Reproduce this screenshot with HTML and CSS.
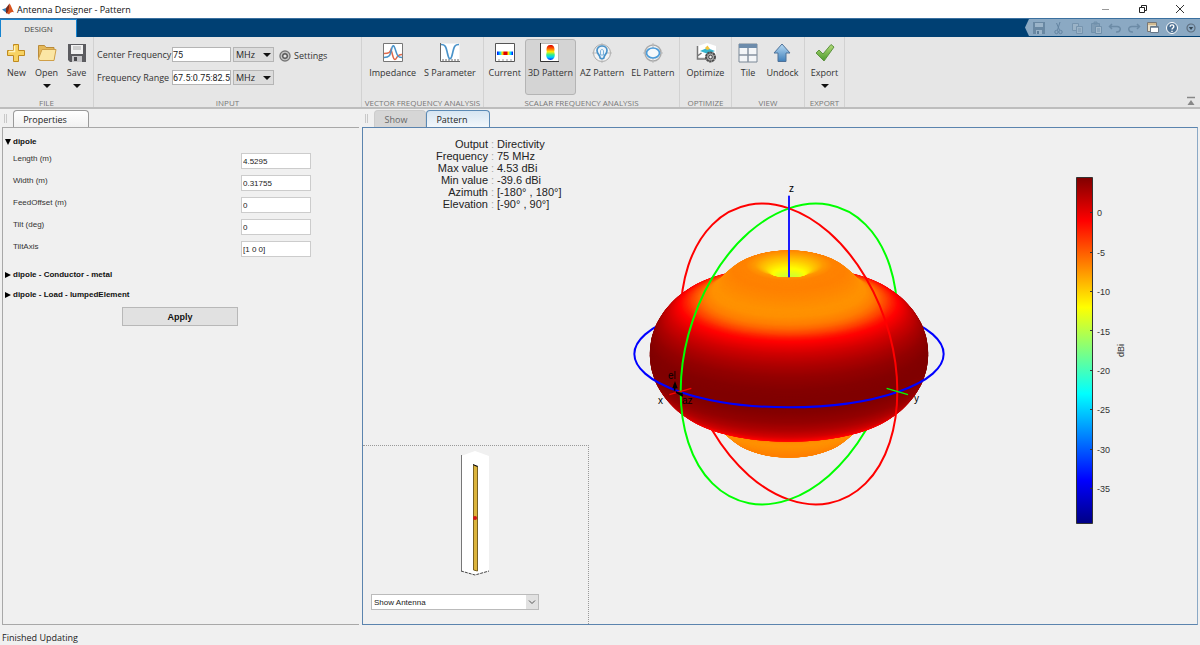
FILE: index.html
```html
<!DOCTYPE html>
<html lang="en">
<head>
<meta charset="utf-8">
<title>Antenna Designer - Pattern</title>
<link rel="stylesheet" href="styles.css">
</head>
<body>
<div class="app">
  <header class="titlebar">
    <svg class="logo" viewBox="0 0 12 12"><path d="M0 6.500 4 5l2 2-2 2.500z" fill="#3b7fb5"/><path d="M4 5 7.500.5 8 7l-3 4-1-1.500z" fill="#7a2a1c"/><path d="M7.500.5C9 2 10 6 12 9.500 10 8.500 9 9 7 11.500L5 10c2-2 2-6 2.500-9.500z" fill="#d9541e"/></svg>
    <h1 class="title">Antenna Designer - Pattern</h1>
    <div class="window-buttons">
      <button aria-label="Minimize"><svg viewBox="0 0 10 10"><path d="M1 5.500h7" stroke="#999" fill="none"/></svg></button>
      <button aria-label="Restore"><svg viewBox="0 0 10 10"><path d="M1.500 3.500h5v5h-5zM3.500 3V1.500h5v5H7" stroke="#222" fill="none"/></svg></button>
      <button aria-label="Close"><svg viewBox="0 0 10 10"><path d="m1 1 8 8M9 1 1 9" stroke="#333" fill="none"/></svg></button>
    </div>
  </header>

  <nav class="ribbon">
    <button class="ribbon-tab">DESIGN</button>
    <div class="quick">
      <button aria-label="Save"><svg viewBox="0 0 14 14"><path d="M1 1h12v12H1z" fill="#6988a3"/><path d="M3 2h8v4H3zM4 9h6v4H4z" fill="#9bb4c9"/><path d="M5 10h2v3H5z" fill="#5c7c98"/></svg></button>
      <button aria-label="Cut"><svg viewBox="0 0 14 14" fill="none" stroke="#6484a1"><path d="M9 1 6.500 9M5.500 2l3 7"/><circle cx="5.500" cy="11" r="1.700"/><circle cx="9.500" cy="11" r="1.700"/></svg></button>
      <button aria-label="Copy"><svg viewBox="0 0 14 14" fill="#9bb3c7" stroke="#7694ae"><path d="M2.500 2.500h6v7h-6z"/><path d="M6.500 5.500h6v7h-6zM8 8h3M8 10h3"/></svg></button>
      <button aria-label="Paste"><svg viewBox="0 0 14 14" fill="#7f9cb5" stroke="#7090ab"><path d="M2.500 2.500h8v9h-8zM5 1h3v2H5z"/><path d="M6.500 5.500h6v7h-6zM8 8h3M8 10h3" fill="#a3b9cb"/></svg></button>
      <button aria-label="Undo"><svg viewBox="0 0 14 14" fill="none" stroke="#6c8ba6" stroke-width="1.500"><path d="M4 3 1.500 5.500 4 8M2 5.500h7c5 0 4 6-1 5.500"/></svg></button>
      <button aria-label="Redo"><svg viewBox="0 0 14 14" fill="none" stroke="#6c8ba6" stroke-width="1.500"><path d="m10 3 2.500 2.500L10 8M12 5.500H5c-5 0-4 6 1 5.500"/></svg></button>
      <button aria-label="Switch windows"><svg viewBox="0 0 14 14"><path d="M1.500 1.500h9v9h-9z" fill="#e8dfc8" stroke="#777"/><path d="M2 3h8" stroke="#b9955a"/><path d="M4.500 5.500h8v6h-8z" fill="#fff" stroke="#678"/><path d="M5 6.500h7" stroke="#89a"/></svg></button>
      <button aria-label="Help"><svg viewBox="0 0 14 14"><circle cx="7" cy="7" r="5.500" fill="#4d7194" stroke="#fff"/><path d="M5.200 5.700c0-2.600 3.800-2.300 3.600 0C8.700 7 7 7 7 8.500M7 9.700v1.400" fill="none" stroke="#fff" stroke-width="1.400"/></svg></button>
      <button aria-label="More"><svg viewBox="0 0 14 14"><circle cx="7" cy="7" r="4" fill="none" stroke="#5d6d7d" stroke-width="1.200"/><path d="M4.800 6h4.400L7 9z" fill="#344554"/></svg></button>
    </div>
  </nav>

  <div class="toolstrip">
    <section class="group g-file">
      <div class="tools">
        <button class="tool"><svg viewBox="0 0 20 20"><path d="M7.500 1.500h5v6h6v5h-6v6h-5v-6h-6v-5h6z" fill="#f7d262" stroke="#c08a1e"/><path d="M8.500 3v5.500H3" stroke="#fff3bd" fill="none" stroke-width="1.500"/></svg><span>New</span></button>
        <button class="tool"><svg viewBox="0 0 20 20"><path d="M1.500 16V2.500h6l1.500 2h8V16z" fill="#e5b95a" stroke="#b98b3a"/><path d="m2.500 17.500-1-2 3.500-9h14l-2 11z" fill="#fbe6a4" stroke="#cf9f48"/></svg><span>Open</span><i class="caret"></i></button>
        <button class="tool"><svg viewBox="0 0 20 20"><path d="M1 1h18v18H3l-2-2z" fill="#5c5c60"/><path d="M4 2h12v9H4z" fill="#f2f2f2"/><path d="M6 4h8M6 6h8" stroke="#aaa"/><path d="M5 13h10v6H5z" fill="#c5c5c8"/><path d="M7 14h3v4H7z" fill="#4a4a4e"/></svg><span>Save</span><i class="caret"></i></button>
      </div>
      <h2>FILE</h2>
    </section>

    <section class="group g-input">
      <div class="tools input-tools">
        <form class="freq">
          <label for="cf">Center Frequency</label>
          <input id="cf" value="75">
          <span class="unit"><select aria-label="Center frequency unit"><option>MHz</option></select></span>
          <label for="fr">Frequency Range</label>
          <input id="fr" value="67.5:0.75:82.5">
          <span class="unit"><select aria-label="Frequency range unit"><option>MHz</option></select></span>
        </form>
        <button class="settings"><svg viewBox="0 0 12 12" fill="none"><circle cx="6" cy="6" r="5" stroke="#777" stroke-width="1.400"/><circle cx="6" cy="6" r="3.600" stroke="#bbb"/><circle cx="6" cy="6" r="2.300" stroke="#555" stroke-width="1.400"/></svg>Settings</button>
      </div>
      <h2>INPUT</h2>
    </section>

    <section class="group g-vector">
      <div class="tools">
        <button class="tool"><svg viewBox="0 0 20 20"><path d="M.5.500h19v18H.5z" fill="#fff" stroke="#777"/><path d="M1 10.500c5 0 6-1 7-4 2 6 2 10 4 10 2 0 1-5 7-5" fill="none" stroke="#e0694a" stroke-width="1.500"/><path d="M1 14.500c6 0 6-2 8-10 1-3 2-2 3 1 2 6 2 9 7 9" fill="none" stroke="#4a93c9" stroke-width="1.500"/></svg><span>Impedance</span></button>
        <button class="tool"><svg viewBox="0 0 20 20"><path d="M.5.500h19v18H.5z" fill="#fff"/><path d="M.5 0v18.500H20M3 18v-2m3 2v-2m3 2v-2m3 2v-2m3 2v-2m3 2v-2" fill="none" stroke="#666"/><path d="M1 1.500c5 0 5 3 6.500 9 1.500 7 3.500 7 5 0 1.500-6 1.500-9 6.500-9" fill="none" stroke="#4a93c9" stroke-width="1.700"/></svg><span>S Parameter</span></button>
      </div>
      <h2>VECTOR FREQUENCY ANALYSIS</h2>
    </section>

    <section class="group g-scalar">
      <div class="tools">
        <button class="tool"><svg viewBox="0 0 20 20"><defs><linearGradient id="cur"><stop offset="0" stop-color="#00f"/><stop offset=".2" stop-color="#0df"/><stop offset=".33" stop-color="#fe0"/><stop offset=".45" stop-color="#d00"/><stop offset=".6" stop-color="#d00"/><stop offset=".72" stop-color="#fe0"/><stop offset=".85" stop-color="#0df"/><stop offset="1" stop-color="#00f"/></linearGradient></defs><path d="M.5.500h19v18H.5z" fill="#fff" stroke="#555"/><path d="M2 8.500h16v3.500H2z" fill="url(#cur)"/><path d="M4 18v-2m4 2v-2m4 2v-2m4 2v-2" stroke="#999"/></svg><span>Current</span></button>
        <button class="tool active" aria-pressed="true"><svg viewBox="0 0 20 20"><defs><linearGradient id="pat" x2="0" y2="1"><stop offset="0" stop-color="#d00"/><stop offset=".25" stop-color="#f60"/><stop offset=".45" stop-color="#fe0"/><stop offset=".65" stop-color="#3e8"/><stop offset=".82" stop-color="#0cf"/><stop offset="1" stop-color="#02f"/></linearGradient></defs><path d="M.5.500h18v18H.5z" fill="#fff" stroke="#bbb"/><path d="M.5 0v18.500H19" fill="none" stroke="#333"/><path d="M10.500 2c3 0 4 2 4 4.500 0 1.500-.5 2 0 3.500 1 4-1 7-4 7s-5-3-4-7c.5-1.500 0-2 0-3.500 0-2.500 1-4.500 4-4.500z" fill="url(#pat)"/></svg><span>3D Pattern</span></button>
        <button class="tool"><svg viewBox="0 0 20 20" fill="none"><circle cx="10" cy="10" r="8.500" fill="#f4f4f4" stroke="#aaa"/><path d="M10 0v20M0 10h20" stroke="#bbb"/><path d="M8 14.500c0-2.500-3-3.500-3-7 0-6 10-6 10 0 0 3.500-3 4.500-3 7 0 1.500-4 1.500-4 0z" fill="#eef5fb" stroke="#4a93c9" stroke-width="1.700"/><path d="M8.500 8c0-2 3-2 3 0v4h-3z" stroke="#7ab2dc"/></svg><span>AZ Pattern</span></button>
        <button class="tool"><svg viewBox="0 0 20 20" fill="none"><circle cx="10" cy="10" r="8" fill="#f4f4f4" stroke="#aaa" stroke-width="1.500"/><path d="M10 0v20M0 10h20" stroke="#bbb"/><ellipse cx="10" cy="10" rx="6.500" ry="5" fill="#f4f8fb" stroke="#4a9bd9" stroke-width="1.700"/></svg><span>EL Pattern</span></button>
      </div>
      <h2>SCALAR FREQUENCY ANALYSIS</h2>
    </section>

    <section class="group g-optimize">
      <div class="tools">
        <button class="tool"><svg viewBox="0 0 20 20"><path d="m2 3 9-3 9 3v11H2z" fill="#fff"/><path d="M1.500 3v13h9M1.500 13l4-3" fill="none" stroke="#777" stroke-width="1.500"/><path d="m4 8 7-3 8 3-7 3z" fill="#35b5cf"/><path d="m9 5 2.500-2.500L14 6l-3 1z" fill="#f2c33a"/><circle cx="14.500" cy="14" r="4.500" fill="#aaa" stroke="#4d4d4d" stroke-width="2" stroke-dasharray="2.400 .5"/><circle cx="14.500" cy="14" r="1.800" fill="#eee" stroke="#444"/></svg><span>Optimize</span></button>
      </div>
      <h2>OPTIMIZE</h2>
    </section>

    <section class="group g-view">
      <div class="tools">
        <button class="tool"><svg viewBox="0 0 20 20"><path d="M1 1h18v18H1z" fill="#f4f6f8" stroke="#7b8896"/><path d="M1 1h18v4H1z" fill="#6d8cab"/><path d="M10 5v14M1 12h18" stroke="#8793a0" stroke-width="1.500"/></svg><span>Tile</span></button>
        <button class="tool"><svg viewBox="0 0 20 20"><defs><linearGradient id="up" x2="0" y2="1"><stop offset="0" stop-color="#b9dcf5"/><stop offset="1" stop-color="#3f7fba"/></linearGradient></defs><path d="m10 1 8 9h-4v8.500H6V10H2z" fill="url(#up)" stroke="#4f7299"/></svg><span>Undock</span></button>
      </div>
      <h2>VIEW</h2>
    </section>

    <section class="group g-export">
      <div class="tools">
        <button class="tool"><svg viewBox="0 0 20 20"><defs><linearGradient id="ok" x2="0" y2="1"><stop offset="0" stop-color="#b4dc7a"/><stop offset="1" stop-color="#4b9a2c"/></linearGradient></defs><path d="m1 10 3-3 4 4 8-9.500L19 4 9 18z" fill="url(#ok)" stroke="#5d9340"/></svg><span>Export</span><i class="caret"></i></button>
      </div>
      <h2>EXPORT</h2>
    </section>
    <button class="collapse" aria-label="Collapse toolstrip"><svg viewBox="0 0 10 10"><path d="M1 1.500h8" stroke="#888" stroke-width="1.500"/><path d="M5 4 8.500 9h-7z" fill="#888"/></svg></button>
  </div>

  <main class="workspace">
    <section class="pane props">
      <div class="tabs"><i class="grip"></i><button class="tab current">Properties</button></div>
      <form class="pane-body props-body">
        <h3><svg viewBox="0 0 6 6"><path d="M0 0h6L3 6z"/></svg>dipole</h3>
        <div class="fields">
          <label for="len">Length (m)</label><input id="len" value="4.5295">
          <label for="wid">Width (m)</label><input id="wid" value="0.31755">
          <label for="off">FeedOffset (m)</label><input id="off" value="0">
          <label for="tilt">Tilt (deg)</label><input id="tilt" value="0">
          <label for="axis">TiltAxis</label><input id="axis" value="[1 0 0]">
        </div>
        <h3 class="closed"><svg viewBox="0 0 6 6"><path d="M0 0v6l6-3z"/></svg>dipole - Conductor - metal</h3>
        <h3 class="closed"><svg viewBox="0 0 6 6"><path d="M0 0v6l6-3z"/></svg>dipole - Load - lumpedElement</h3>
        <button class="apply" type="button">Apply</button>
      </form>
    </section>

    <section class="pane figure">
      <div class="tabs"><i class="grip"></i><button class="tab idle">Show</button><button class="tab current">Pattern</button></div>
      <div class="pane-body figure-body">
        <div class="side">
          <dl class="info">
            <dt>Output</dt><dd>Directivity</dd>
            <dt>Frequency</dt><dd>75 MHz</dd>
            <dt>Max value</dt><dd>4.53 dBi</dd>
            <dt>Min value</dt><dd>-39.6 dBi</dd>
            <dt>Azimuth</dt><dd>[-180° , 180°]</dd>
            <dt>Elevation</dt><dd>[-90° , 90°]</dd>
          </dl>
          <div class="antenna">
            <svg class="antenna-view" viewBox="0 0 30 126" width="30" height="126">
              <path d="M1 6 15 1l14 5v115l-14 4-14-4z" fill="#fff"/>
              <path d="M1.500 5v116" stroke="#777" fill="none"/>
              <path d="m1 121 14 4 14-4" stroke="#444" fill="none" stroke-dasharray="3 1"/>
              <path d="m13.500 15 4 2v104l-4-1z" fill="#dcb43c" stroke="#7a6120"/>
              <path d="m13 14.500 5 2" stroke="#111"/>
              <circle cx="15" cy="68" r="2" fill="#d01515"/>
            </svg>
            <span class="show"><select aria-label="Show"><option>Show Antenna</option></select><svg viewBox="0 0 12 14"><path d="m3 5.500 3 3 3-3" fill="none" stroke="#555"/></svg></span>
          </div>
        </div>

        <div class="plot">
          <svg viewBox="0 0 340 350" width="340" height="350" role="img" aria-label="3D directivity pattern">
            <g transform="scale(.33333)" fill="none" stroke-width="6">
              <path d="M43 552A464 160 0 0 1 971 552" stroke="#00f"/>
              <g transform="translate(507 552)">
                <path class="ring" transform="matrix(325 112 0 437 0 0)" d="M0 1A1 1 0 0 1 0-1" stroke="#f00"/>
                <path class="ring" transform="matrix(-325 112 0 437 0 0)" d="M0 1A1 1 0 0 1 0-1" stroke="#0f0"/>
              </g>
              <clipPath id="rim"><ellipse id="rim-shape"/></clipPath>
              <g id="surface" stroke="none"></g>
              <path d="M971 552A464 160 0 0 1 43 552" stroke="#00f"/>
              <g transform="translate(507 552)">
                <path class="ring" transform="matrix(325 112 0 437 0 0)" d="M0-1A1 1 0 0 1 0 1" stroke="#f00"/>
                <path class="ring" transform="matrix(-325 112 0 437 0 0)" d="M0-1A1 1 0 0 1 0 1" stroke="#0f0"/>
              </g>
              <path d="M507 77v245" stroke="#1a1aff"/>
              <path d="m148 674 66-19" stroke="#f00" stroke-width="4"/>
              <path d="m800 655 64 19" stroke="#0f0" stroke-width="4"/>
              <path d="M164 662v-20m4 24 20 12" stroke="#000" stroke-width="5"/>
              <path d="m157 655 8-22 8 22zM172 666l16 2v12z" fill="#000"/>
            </g>
            <g class="axis-text">
              <text x="169" y="22">z</text><text x="38" y="234">x</text><text x="294" y="232">y</text>
              <text x="48" y="209">el</text><text x="62" y="234">az</text>
            </g>
          </svg>
        </div>

        <div class="scale">
          <svg viewBox="0 0 54 349" width="54" height="349" role="img" aria-label="Color scale in dBi">
            <defs><linearGradient id="jet" x2="0" y2="1"><stop offset="0" stop-color="#800000"/><stop offset=".125" stop-color="#f00"/><stop offset=".375" stop-color="#ff0"/><stop offset=".625" stop-color="#0ff"/><stop offset=".875" stop-color="#00f"/><stop offset="1" stop-color="#000084"/></linearGradient></defs>
            <path d="M.5 1.500h16v346H.5z" fill="url(#jet)" stroke="#333"/>
            <path d="M14 36.500h3M14 76.500h3M14 115.500h3M14 154.500h3M14 194.500h3M14 233.500h3M14 273.500h3M14 312.500h3" stroke="#333"/>
            <g class="tick-text">
              <text x="21" y="40">0</text><text x="21" y="80">-5</text><text x="21" y="119">-10</text><text x="21" y="159">-15</text><text x="21" y="198">-20</text><text x="21" y="237">-25</text><text x="21" y="277">-30</text><text x="21" y="316">-35</text>
              <text transform="translate(48 181) rotate(-90)">dBi</text>
            </g>
          </svg>
        </div>
      </div>
    </section>
  </main>
  <footer class="status">Finished Updating</footer>
</div>
<script src="plot.js"></script>
</body>
</html>
```

FILE: styles.css
```css
* { box-sizing: border-box; }
body { margin: 0; background: #f0f0f0; font-family: "Open Sans", "Noto Sans", sans-serif; font-size: 9px; color: #333; }
h1, h2, h3, dl, dd { margin: 0; font-weight: normal; font-size: inherit; }
button { font: inherit; color: inherit; background: none; border: 0; padding: 0; margin: 0; }
input, select { font: inherit; color: #222; margin: 0; min-width: 0; border-radius: 0; outline: 0; }
svg { display: block; }
.app { display: flex; flex-direction: column; min-height: 100vh; }

.titlebar { display: flex; align-items: center; height: 18px; padding: 0 8px 0 2px; background: #fff; }
.logo { width: 12px; height: 12px; margin-right: 3px; }
.title { flex: 1; color: #111; }
.window-buttons { display: flex; gap: 27px; padding-right: 7px; }
.window-buttons svg { width: 10px; height: 10px; }

.ribbon { display: flex; justify-content: space-between; height: 19px; background: #004073; border-top: 1px solid #3a70a0; }
.ribbon-tab { width: 77px; background: #e6e6e6; border: solid #1583cf; border-width: 1px 1px 0; font-size: 8px; color: #444; }
.quick { display: flex; align-items: center; gap: 5px; height: 17px; padding: 0 2px 0 7px; background: #8ba9c3; clip-path: polygon(4px 0, 100% 0, 100% 100%, 4px 100%, 0 50%); }
.quick svg { width: 14px; height: 14px; }

.toolstrip { display: flex; height: 72px; background: #e6e6e6; border-bottom: 2px solid #bdbdbd; }
.group { display: flex; flex-direction: column; align-items: center; justify-content: space-between; padding: 2px 0 0; border-right: 1px solid #d2d2d2; }
.group h2 { font-size: 8px; line-height: 9px; color: #777; white-space: nowrap; }
.g-file { flex: 0 0 94px; }
.g-input { flex: 0 0 268px; }
.g-vector { flex: 0 0 122px; }
.g-scalar { flex: 0 0 196px; }
.g-optimize { flex: 0 0 52px; }
.g-view { flex: 0 0 73px; }
.g-export { flex: 0 0 40px; }
.tools { display: flex; }
.tool { display: flex; flex-direction: column; align-items: center; min-width: 29px; height: 56px; padding: 3px 3px 0; border: 1px solid transparent; border-radius: 3px; white-space: nowrap; }
.tool svg { width: 20px; height: 20px; }
.tool span { line-height: 12px; margin-top: 4px; }
.tool.active { background: #d4d4d4; border-color: #b4b4b4; }
.g-scalar .tool { padding: 3px 2px 0; }
.g-scalar .tools { gap: 1px; }
.caret { border: solid transparent; border-width: 4px 4px 0; border-top-color: #111; margin-top: 5px; }
.input-tools { align-self: stretch; padding: 8px 0 0 3px; align-items: flex-start; gap: 5px; }
.freq { display: grid; grid-template-columns: 73px 59px 41px; gap: 8px 2px; align-items: center; white-space: nowrap; }
.freq input { width: 100%; height: 15px; padding: 0; border: 1px solid #b5b5b5; background: #fff; font-family: Roboto, sans-serif; }
.unit { position: relative; height: 15px; }
.unit select { display: block; appearance: none; width: 100%; height: 15px; padding: 0 2px; border: 1px solid #b5b5b5; background: #dcdcdc; }
.unit::after { content: ""; position: absolute; right: 3px; top: 6px; border: solid transparent; border-width: 4px 4px 0; border-top-color: #111; pointer-events: none; }
.settings { display: flex; align-items: center; gap: 3px; height: 17px; }
.settings svg { width: 12px; height: 12px; }
.collapse { align-self: flex-end; margin: 0 4px 1px auto; }
.collapse svg { width: 10px; height: 10px; }

.workspace { flex: 1; display: flex; gap: 3px; padding: 1px 2px 2px; }
.pane { display: flex; flex-direction: column; }
.props { flex: 0 0 357px; }
.figure { flex: 1; }
.tabs { display: flex; height: 17px; padding-left: 3px; }
.grip { width: 3px; margin: 4px 6px 4px 0; border: solid #c8c8c8; border-width: 0 1px; }
.tab { height: 18px; border: 1px solid #9a9a9a; border-bottom: 0; border-radius: 4px 4px 0 0; color: #222; }
.props .tabs { padding-left: 2px; }
.props .tab { width: 76px; padding-right: 12px; background: linear-gradient(#fff, #f0f0f0); }
.figure .idle { width: 52px; height: 17px; padding-right: 8px; border-color: #ccc; background: #d6d6d6; color: #666; }
.figure .current { width: 64px; padding-right: 12px; border-color: #5b8ab5; background: linear-gradient(#d6e5f2, #f4f8fb); }
.pane-body { flex: 1; border: 1px solid #a8a8a8; }
.props-body { border-width: 1px 0 1px 1px; padding: 8px 2px; display: flex; flex-direction: column; font-family: "Liberation Sans", Arial, sans-serif; font-size: 8px; }
.props-body h3 { display: flex; align-items: center; gap: 2px; line-height: 12px; font-weight: bold; color: #111; }
.props-body h3 svg { width: 6px; height: 6px; }
.props-body .closed { margin-bottom: 8px; }
.fields { display: grid; grid-template-columns: 228px 70px; grid-auto-rows: 16px; row-gap: 6px; padding: 5px 0 12px 8px; }
.fields label { line-height: 12px; }
.fields input { height: 16px; padding: 0 1px; border: 1px solid #ccc; background: #fff; }
.apply { align-self: flex-start; width: 116px; height: 19px; margin: -2px 0 0 117px; border: 1px solid #b8b8b8; background: #e1e1e1; font-size: 9px; font-weight: bold; color: #111; }

.figure-body { display: flex; border-color: #5b84ae #8ba9c6 #5b84ae #5b84ae; font-family: "Liberation Sans", Arial, sans-serif; }
.side { flex: 0 0 226px; display: flex; flex-direction: column; justify-content: space-between; }
.info { display: grid; grid-template-columns: 125px 1fr; column-gap: 9px; padding-top: 10px; font-size: 11px; line-height: 12px; color: #222; }
.info dt { position: relative; text-align: right; }
.info dt::after { content: ":"; position: absolute; left: 100%; padding-left: 3px; color: #aaa; }
.info dd { white-space: nowrap; }
.antenna { display: flex; flex-direction: column; gap: 18px; padding: 4px 0 14px 8px; border: dotted #999; border-width: 1px 1px 0 0; }
.antenna-view { margin-left: 89px; }
.show { position: relative; width: 168px; height: 16px; }
.show select { display: block; appearance: none; width: 100%; height: 16px; padding: 0 2px; border: 1px solid #bbb; background: #fff; font-size: 8px; }
.show svg { position: absolute; right: 1px; top: 1px; width: 12px; height: 14px; background: #e1e1e1; pointer-events: none; }
.plot { flex: 1; display: flex; justify-content: center; align-items: flex-start; padding-top: 42px; }
.ring { vector-effect: non-scaling-stroke; stroke-width: 2px; }
.axis-text { font-size: 10px; fill: #000; }
.scale { flex: 0 0 206px; padding: 48px 0 0 85px; }
.tick-text { font-size: 9px; fill: #333; }

.status { height: 18px; padding: 5px 2px 0; line-height: 12px; color: #222; }
```

FILE: plot.js
```js
// Surface radius by elevation angle; the surface is one of revolution about z.
const profile = [[0, 418], [5, 416], [10, 410], [15, 399], [20, 385], [26, 364], [28, 353],
  [30, 340], [33, 325], [36, 315], [41, 307], [45, 306], [52, 310], [58, 313], [65, 312],
  [70, 303], [75, 284], [80, 257], [85, 232], [90, 215]];
const MAX = 418, CX = 507, CY = 552, SIN = 0.345, COS = 0.939, RIM = 70;

function radius(el) {
  const a = Math.abs(el);
  let i = 0;
  while (i < profile.length - 2 && a > profile[i + 1][0]) i++;
  const [a0, r0] = profile[i], [a1, r1] = profile[i + 1];
  return r0 + (r1 - r0) * (a - a0) / (a1 - a0);
}

function jet(t) {
  const c = k => Math.round(255 * Math.max(0, Math.min(1, 1.5 - Math.abs(4 * t - k))));
  return `rgb(${c(3)},${c(2)},${c(1)})`;
}

function disc(el) {
  const r = radius(el), a = el * Math.PI / 180, w = r * Math.cos(a);
  return { cx: CX, cy: CY - r * Math.sin(a) * COS, rx: w, ry: w * SIN, fill: jet(r / MAX) };
}

function draw(node, attrs) {
  for (const k in attrs) node.setAttribute(k, attrs[k]);
  return node;
}

const ns = "http://www.w3.org/2000/svg";
const surface = document.getElementById("surface");
draw(document.getElementById("rim-shape"), disc(RIM));
const crater = document.createElementNS(ns, "g");
crater.setAttribute("clip-path", "url(#rim)");
for (let el = -RIM; el <= 89; el += 0.5) {
  const parent = el <= RIM ? surface : crater;
  parent.appendChild(draw(document.createElementNS(ns, "ellipse"), disc(el)));
}
surface.appendChild(crater);
```
